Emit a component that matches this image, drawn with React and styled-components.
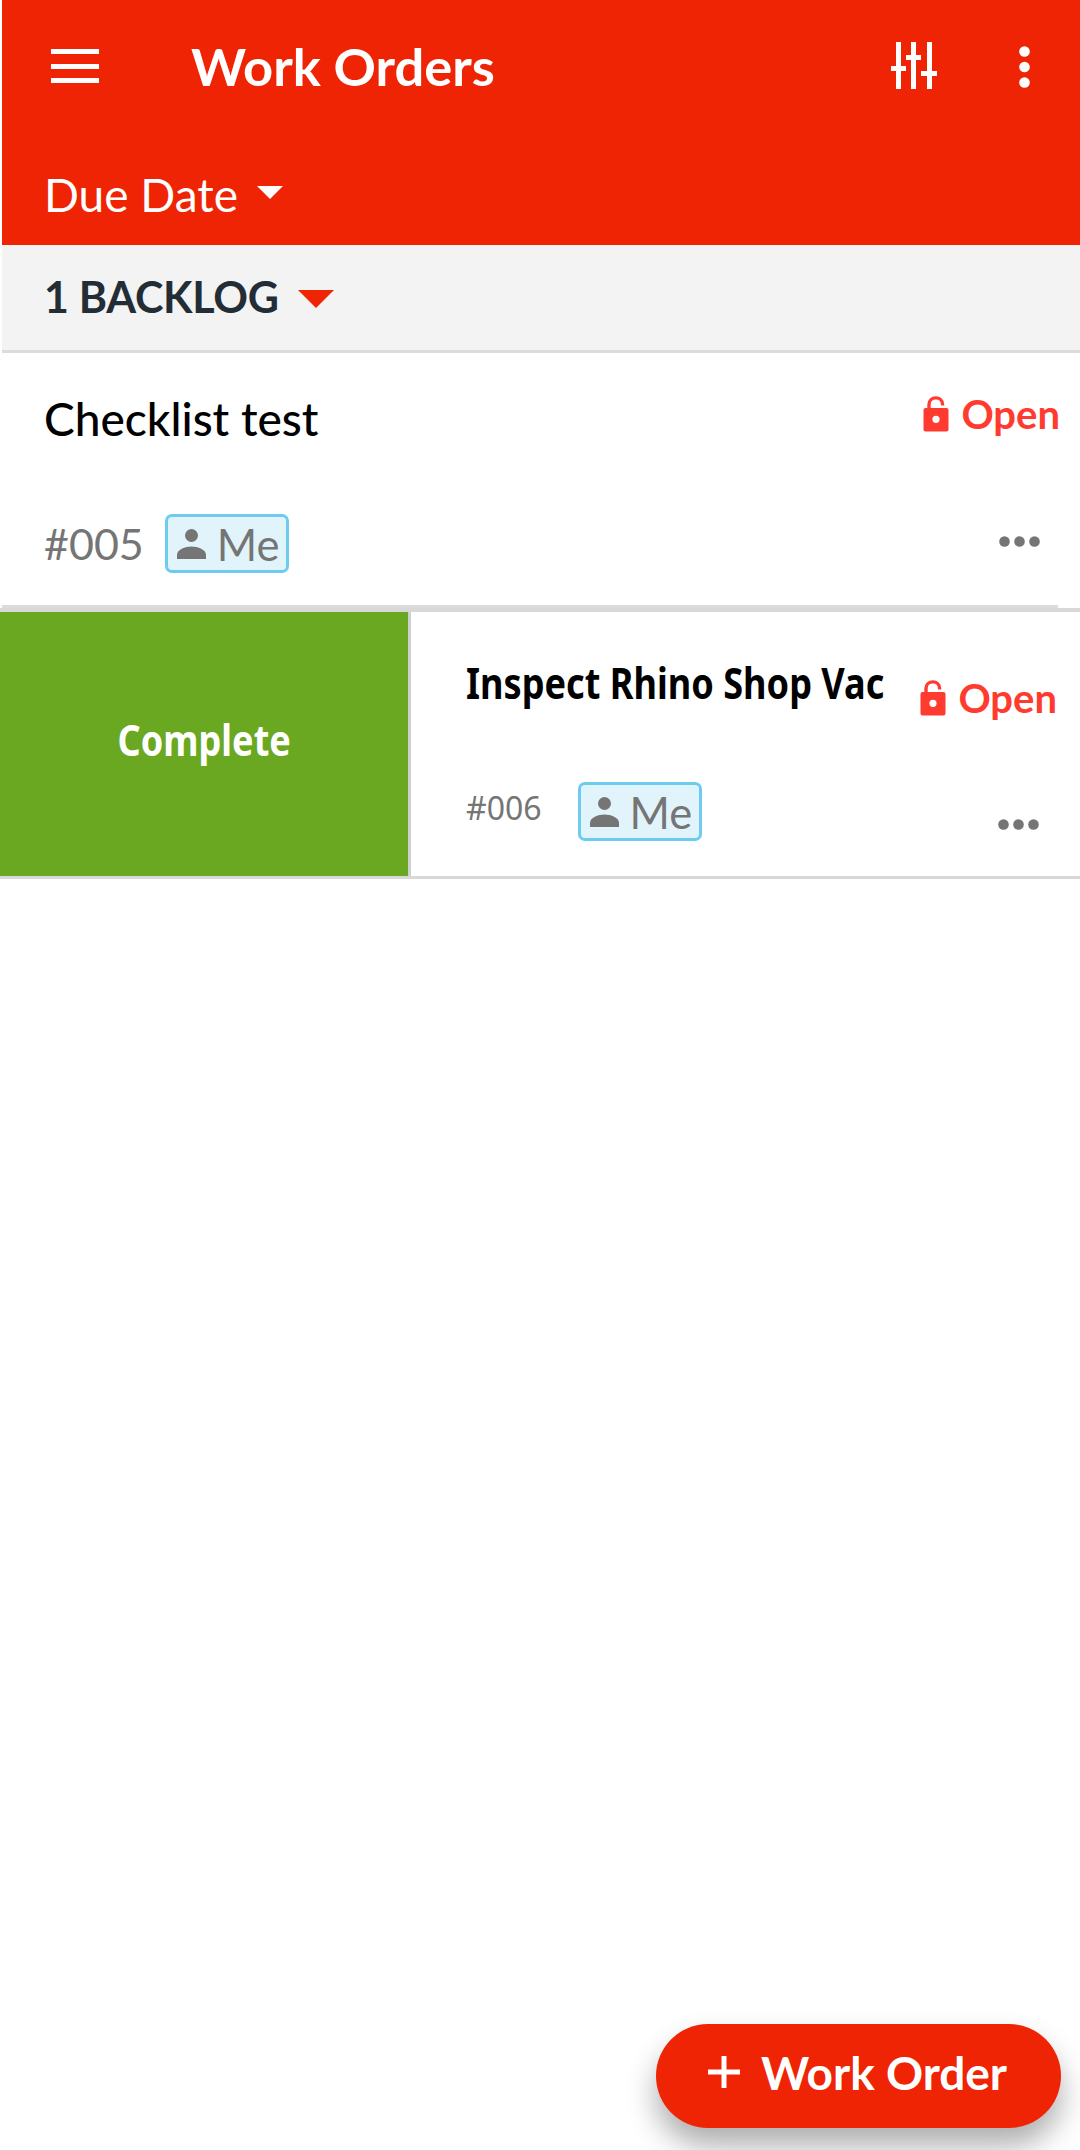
import React from 'react';
import styled, { createGlobalStyle } from 'styled-components';

const RED = '#ee2404';
const GRAY = '#757575';
const LINE = '#dcdcdc';

const GlobalStyle = createGlobalStyle`
  html, body {
    margin: 0;
    padding: 0;
    background: #fff;
  }
  * {
    box-sizing: border-box;
  }
`;

const Page = styled.div`
  position: relative;
  width: 1080px;
  height: 2150px;
  overflow: hidden;
  background: #fff;
  font-family: Lato, 'Noto Sans', sans-serif;
`;

const Header = styled.header`
  margin-left: 2px;
  height: 245px;
  background: ${RED};
  color: #fff;
  display: flex;
  flex-direction: column;
`;

const TopBar = styled.div`
  display: flex;
  align-items: flex-start;
  padding: 42px 0 0 49px;
  height: 160px;
`;

const MenuIcon = styled.svg`
  display: block;
  margin-top: 7px;
`;

const Title = styled.h1`
  margin: -9px 0 0 92px;
  font-size: 52.5px;
  line-height: 66px;
  font-weight: 700;
  flex: 1;
`;

const TopIcons = styled.div`
  display: flex;
  align-items: flex-start;
  padding-right: 50px;
  gap: 82px;
`;

const KebabWrap = styled.div`
  padding-top: 4px;
`;

const SortBy = styled.div`
  display: flex;
  align-items: center;
  gap: 19px;
  padding-left: 42px;
  font-size: 46px;
  line-height: 54px;
  margin-top: 8px;
`;

const Caret = styled.span`
  display: block;
  width: 0;
  height: 0;
  border-style: solid;
  border-color: ${(props) => props.color} transparent transparent transparent;
  border-width: ${(props) => props.h}px ${(props) => props.w}px 0 ${(props) => props.w}px;
  margin-top: ${(props) => props.top}px;
`;

const GroupBar = styled.div`
  margin-left: 2px;
  height: 108px;
  background: #f3f3f3;
  border-bottom: 3px solid ${LINE};
  display: flex;
  align-items: center;
  gap: 19px;
  padding: 0 0 2px 42px;
  font-size: 43px;
  letter-spacing: -0.3px;
  font-weight: 700;
  color: #232d35;
`;

const CardOne = styled.section`
  margin-left: 2px;
  height: 255px;
  width: 1056px;
  display: flex;
  flex-direction: column;
  border-bottom: 3px solid ${LINE};
  padding: 38px 0 0 42px;
`;

const CardRow = styled.div`
  display: flex;
  align-items: center;
`;

const MetaRow = styled.div`
  display: flex;
  align-items: flex-start;
`;

const CardTitle = styled.div`
  flex: 1;
  font-size: 46px;
  line-height: 56px;
  font-weight: 500;
  color: #000;
`;

const Status = styled.div`
  display: flex;
  align-items: center;
  gap: 12px;
  font-size: 40px;
  line-height: 48px;
  font-weight: 700;
  color: #ff3b30;
  white-space: nowrap;
`;

const CardOneStatus = styled(Status)`
  margin: -10px -2px 0 0;
`;

const CardOneMeta = styled(MetaRow)`
  margin-top: 67px;
`;

const Ref = styled.span`
  font-size: 43px;
  line-height: 60px;
  color: ${GRAY};
`;

const Chip = styled.span`
  display: inline-flex;
  align-items: center;
  gap: 11px;
  width: 124px;
  height: 59px;
  padding-left: 9px;
  background: #e1f4fb;
  border: 3px solid #6dcbf0;
  border-radius: 7px;
  color: ${GRAY};
  font-size: 43.5px;
  margin-left: ${(props) => props.gap}px;
`;

const Dots = styled.svg`
  display: block;
  margin: ${(props) => props.top}px ${(props) => props.right}px 0 auto;
`;

const SwipeRow = styled.section`
  display: flex;
  height: 271px;
  border-top: 4px solid #d8d8d8;
  border-bottom: 3px solid #d8d8d8;
`;

const SwipeAction = styled.div`
  flex: 0 0 411px;
  background: #6aa821;
  border-right: 3px solid #d0d0d0;
  display: flex;
  align-items: center;
  justify-content: center;
  color: #fff;
  padding-bottom: 10px;
`;

const Condensed = styled.span`
  display: inline-block;
  font-family: 'Noto Sans', Lato, sans-serif;
  font-weight: 700;
  white-space: nowrap;
  transform: scaleX(0.84);
`;

const ActionLabel = styled(Condensed)`
  font-size: 43px;
`;

const SwipeBody = styled.div`
  flex: 1;
  min-width: 0;
  padding-left: 55px;
  display: flex;
  flex-direction: column;
`;

const SwipeTop = styled(CardRow)`
  height: 124px;
  padding-top: 4px;
`;

const SwipeTitle = styled(Condensed)`
  flex: 1 1 0;
  min-width: 0;
  font-size: 43px;
  color: #000;
  transform-origin: left center;
  margin-top: 12px;
`;

const SwipeStatus = styled(Status)`
  margin: 44px 23px 0 0;
`;

const SwipeMeta = styled(MetaRow)`
  margin-top: 46px;
`;

const SmallRef = styled.span`
  font-family: 'Noto Sans', Lato, sans-serif;
  font-size: 32px;
  line-height: 40px;
  color: ${GRAY};
  margin-top: 6px;
`;

const Fab = styled.button`
  position: absolute;
  left: 656px;
  top: 2024px;
  width: 405px;
  height: 104px;
  border: 0;
  border-radius: 52px;
  background: ${RED};
  color: #fff;
  display: flex;
  align-items: center;
  gap: 21px;
  padding: 0 0 8px 52px;
  font-family: inherit;
  font-size: 46px;
  font-weight: 700;
  box-shadow: 0 18px 30px rgba(0, 0, 0, 0.32);
`;

const Menu = () => (
  <MenuIcon width="48" height="34" viewBox="0 0 48 34">
    <path fill="#fff" d="M0 0h48v5H0zM0 15h48v5H0zM0 29h48v5H0z" />
  </MenuIcon>
);

const Sliders = () => (
  <svg width="46" height="47" viewBox="0 0 46 47">
    <path
      fill="#fff"
      d="M5 0h5v24H15v5H10v18H5V29H0v-5h5zM20 0h5v13h5v5h-5v29h-5V18h-5v-5h5zM36 0h5v29h5v5h-5v13h-5V34h-6v-5h6z"
    />
  </svg>
);

const Kebab = () => (
  <svg width="11" height="42" viewBox="0 0 11 42">
    <circle cx="5.5" cy="5.5" r="5.3" fill="#fff" />
    <circle cx="5.5" cy="21" r="5.3" fill="#fff" />
    <circle cx="5.5" cy="36.5" r="5.3" fill="#fff" />
  </svg>
);

const Lock = () => (
  <svg width="26" height="36" viewBox="0 0 26 36">
    <path
      fill="none"
      stroke="#ff3b30"
      strokeWidth="3.4"
      d="M6 13V8.5C6 4.4 9 1.9 12.8 1.9s6.8 2.5 6.8 6.6v1"
    />
    <path
      fill="#ff3b30"
      fillRule="evenodd"
      d="M2.5 12h21a2 2 0 0 1 2 2v19.5a2 2 0 0 1-2 2h-21a2 2 0 0 1-2-2V14a2 2 0 0 1 2-2zM13 19.7a3.6 3.6 0 1 0 0 7.2 3.6 3.6 0 0 0 0-7.2z"
    />
  </svg>
);

const Person = () => (
  <svg width="29" height="30" viewBox="0 0 29 30">
    <circle cx="14.5" cy="6.5" r="6.5" fill={GRAY} />
    <path fill={GRAY} d="M0 30v-4c0-5.5 8-8.5 14.5-8.5S29 20.5 29 26v4z" />
  </svg>
);

const MoreDots = ({ top, right }) => (
  <Dots width="41" height="11" viewBox="0 0 41 11" top={top} right={right}>
    <circle cx="5.5" cy="5.5" r="5.3" fill={GRAY} />
    <circle cx="20.5" cy="5.5" r="5.3" fill={GRAY} />
    <circle cx="35.5" cy="5.5" r="5.3" fill={GRAY} />
  </Dots>
);

const Plus = () => (
  <svg width="32" height="32" viewBox="0 0 32 32">
    <path fill="#fff" d="M13.5 0h5v13.5H32v5H18.5V32h-5V18.5H0v-5h13.5z" />
  </svg>
);

const ChipMe = ({ gap }) => (
  <Chip gap={gap}>
    <Person />
    Me
  </Chip>
);

const StatusOpen = ({ as: Wrap }) => (
  <Wrap>
    <Lock />
    Open
  </Wrap>
);

const App = () => (
  <Page>
    <GlobalStyle />
    <Header>
      <TopBar>
        <Menu />
        <Title>Work Orders</Title>
        <TopIcons>
          <Sliders />
          <KebabWrap>
            <Kebab />
          </KebabWrap>
        </TopIcons>
      </TopBar>
      <SortBy>
        Due Date
        <Caret color="#fff" w={13} h={13} top={-5} />
      </SortBy>
    </Header>
    <GroupBar>
      1 BACKLOG
      <Caret color={RED} w={18} h={18} top={4} />
    </GroupBar>
    <CardOne>
      <CardRow>
        <CardTitle>Checklist test</CardTitle>
        <StatusOpen as={CardOneStatus} />
      </CardRow>
      <CardOneMeta>
        <Ref>#005</Ref>
        <ChipMe gap={21} />
        <MoreDots top={22} right={18} />
      </CardOneMeta>
    </CardOne>
    <SwipeRow>
      <SwipeAction>
        <ActionLabel>Complete</ActionLabel>
      </SwipeAction>
      <SwipeBody>
        <SwipeTop>
          <SwipeTitle>Inspect Rhino Shop Vac</SwipeTitle>
          <StatusOpen as={SwipeStatus} />
        </SwipeTop>
        <SwipeMeta>
          <SmallRef>#006</SmallRef>
          <ChipMe gap={36} />
          <MoreDots top={37} right={41} />
        </SwipeMeta>
      </SwipeBody>
    </SwipeRow>
    <Fab>
      <Plus />
      Work Order
    </Fab>
  </Page>
);

export default App;
